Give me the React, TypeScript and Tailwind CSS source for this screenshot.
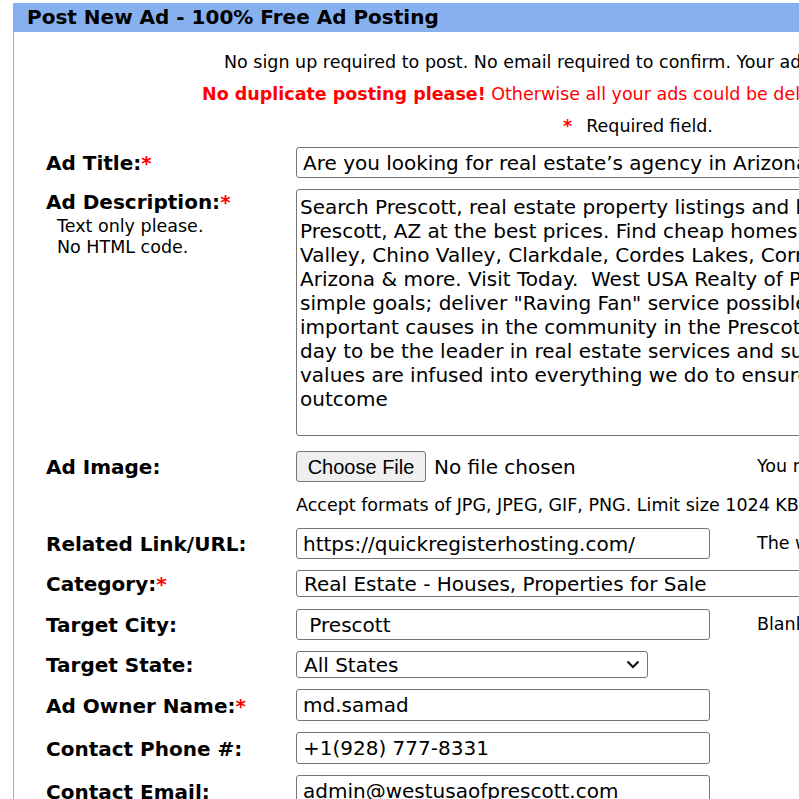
import React from 'react';

const Star = () => <span className="text-[#ff0000]">*</span>;

const Label: React.FC<{ text: string; req?: boolean }> = ({ text, req }) => (
  <div className="w-[250px] shrink-0 font-bold text-[20px] leading-[24px] pt-[1px]">
    {text}
    {req && <Star />}
  </div>
);

const inputCls =
  "h-[31px] border border-[#767676] rounded-[3px] px-[6px] text-[20px] text-black bg-white font-['DejaVu_Sans',sans-serif] outline-none";

const Chevron = () => (
  <svg width="14" height="9" viewBox="0 0 14 9" className="shrink-0">
    <path d="M1.5 1.5 L7 7 L12.5 1.5" fill="none" stroke="#111" strokeWidth="2.2" />
  </svg>
);

const description = [
  'Search Prescott, real estate property listings and homes for sale in',
  'Prescott, AZ at the best prices. Find cheap homes in Prescott, Prescott',
  'Valley, Chino Valley, Clarkdale, Cordes Lakes, Cornville, Cottonwood,',
  'Arizona & more. Visit Today.  West USA Realty of Prescott was founded on',
  'simple goals; deliver "Raving Fan" service possible, and give back to',
  'important causes in the community in the Prescott area, and strive every',
  'day to be the leader in real estate services and support. These core',
  'values are infused into everything we do to ensure the best possible',
  'outcome',
].join('\n');

const App: React.FC = () => {
  return (
    <div className="w-[799px] h-[799px] overflow-hidden bg-white text-black font-['DejaVu_Sans',sans-serif]">
      <div className="ml-[13px] mt-[3px] w-[1300px] min-h-[900px] border-l border-[#88b0ee]">
        <div className="h-[29px] bg-[#87b0ef] pl-[13px] text-[20px] font-bold leading-[29px]">
          Post New Ad - 100% Free Ad Posting
        </div>

        <div className="mt-[18px] h-[24px] leading-[24px] text-[17.5px] pl-[210px] whitespace-nowrap">
          No sign up required to post. No email required to confirm. Your ad will be posted instantly.
        </div>
        <div className="mt-[8px] h-[24px] leading-[24px] text-[17.5px] pl-[188px] whitespace-nowrap text-[#ff0000]">
          <span className="font-bold">No duplicate posting please!</span> Otherwise all your ads could be deleted.
        </div>
        <div className="mt-[8px] h-[24px] leading-[24px] text-[17.5px] pl-[549px] whitespace-nowrap">
          <span className="text-[#ff0000] font-bold">*</span>
          <span className="ml-[14px]">Required field.</span>
        </div>

        <div className="pl-[32px] flex flex-col">
          {/* Ad Title */}
          <div className="mt-[9px] flex items-center">
            <Label text="Ad Title:" req />
            <input readOnly className={`${inputCls} w-[700px]`} value="Are you looking for real estate’s agency in Arizona?" />
          </div>

          {/* Ad Description */}
          <div className="mt-[11px] flex items-start">
            <div className="w-[250px] shrink-0">
              <div className="font-bold text-[20px] leading-[24px] pt-[1px]">
                Ad Description:<Star />
              </div>
              <div className="pl-[11px] pt-[2px] text-[17.5px] leading-[21px]">
                Text only please.
                <br />
                No HTML code.
              </div>
            </div>
            <textarea
              readOnly
              wrap="off"
              className="w-[1000px] h-[247px] border border-[#767676] rounded-[3px] px-[3px] pt-[5px] text-[20px] leading-[24px] resize-none outline-none overflow-hidden font-['DejaVu_Sans',sans-serif]"
              value={description}
            />
          </div>

          {/* Ad Image */}
          <div className="mt-[15px] flex items-center">
            <Label text="Ad Image:" />
            <div className="w-[461px] flex items-center">
              <div className="h-[31px] w-[130px] border border-[#767676] rounded-[3px] bg-[#efefef] flex items-center justify-center text-[20px] font-['Liberation_Sans',sans-serif]">
                Choose File
              </div>
              <span className="ml-[8px] text-[20px]">No file chosen</span>
            </div>
            <span className="text-[17.5px] whitespace-nowrap">You may upload one image.</span>
          </div>
          <div className="mt-[11px] pl-[250px] h-[24px] leading-[24px] text-[17.5px] whitespace-nowrap">
            Accept formats of JPG, JPEG, GIF, PNG. Limit size 1024 KB.
          </div>

          {/* Related Link */}
          <div className="mt-[11px] flex items-center">
            <Label text="Related Link/URL:" />
            <input readOnly className={`${inputCls} w-[414px]`} value="https://quickregisterhosting.com/" />
            <span className="ml-[47px] text-[17.5px] whitespace-nowrap">The website address</span>
          </div>

          {/* Category */}
          <div className="mt-[11px] flex items-center">
            <Label text="Category:" req />
            <div className="h-[27px] w-[700px] border border-[#767676] rounded-[3px] pl-[7px] flex items-center text-[20px] whitespace-nowrap">
              Real Estate - Houses, Properties for Sale
            </div>
          </div>

          {/* Target City */}
          <div className="mt-[12px] flex items-center">
            <Label text="Target City:" />
            <input readOnly className={`${inputCls} w-[414px]`} value=" Prescott" />
            <span className="ml-[47px] text-[17.5px] whitespace-nowrap">Blank for all cities</span>
          </div>

          {/* Target State */}
          <div className="mt-[11px] flex items-center">
            <Label text="Target State:" />
            <div className="h-[27px] w-[352px] border border-[#767676] rounded-[3px] pl-[7px] pr-[7px] flex items-center justify-between text-[20px]">
              <span>All States</span>
              <Chevron />
            </div>
          </div>

          {/* Owner */}
          <div className="mt-[11px] flex items-center">
            <Label text="Ad Owner Name:" req />
            <input readOnly className={`${inputCls} w-[414px] h-[32px]`} value="md.samad" />
          </div>

          {/* Phone */}
          <div className="mt-[11px] flex items-center">
            <Label text="Contact Phone #:" />
            <input readOnly className={`${inputCls} w-[414px] h-[32px]`} value="+1(928) 777-8331" />
          </div>

          {/* Email */}
          <div className="mt-[11px] flex items-center">
            <Label text="Contact Email:" />
            <input readOnly className={`${inputCls} w-[414px] h-[32px]`} value="admin@westusaofprescott.com" />
          </div>
        </div>
      </div>
    </div>
  );
};

export default App;
